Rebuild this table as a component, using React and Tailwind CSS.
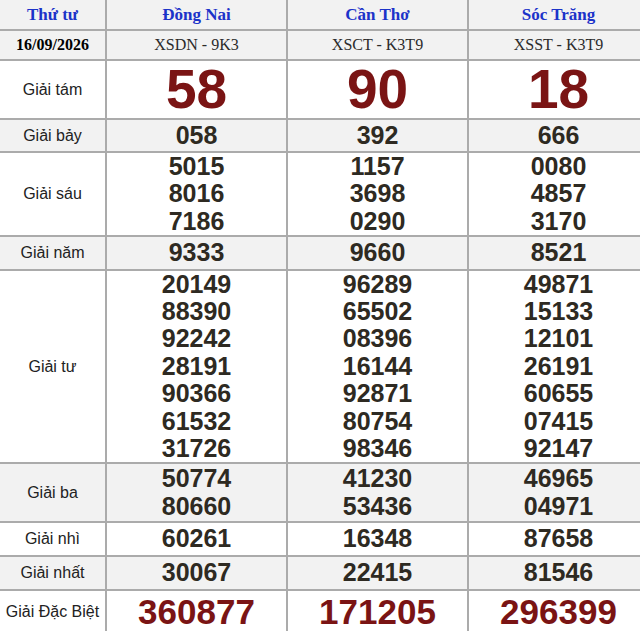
const PROVINCES = [
  { name: 'Đồng Nai', code: 'XSDN - 9K3' },
  { name: 'Cần Thơ', code: 'XSCT - K3T9' },
  { name: 'Sóc Trăng', code: 'XSST - K3T9' },
];

const PRIZES = [
  { label: 'Giải tám', h: 'h-[57px]', big: true, values: [['58'], ['90'], ['18']] },
  { label: 'Giải bảy', h: 'h-[31px]', values: [['058'], ['392'], ['666']] },
  {
    label: 'Giải sáu',
    h: 'h-[82px]',
    values: [
      ['5015', '8016', '7186'],
      ['1157', '3698', '0290'],
      ['0080', '4857', '3170'],
    ],
  },
  { label: 'Giải năm', h: 'h-[32px]', values: [['9333'], ['9660'], ['8521']] },
  {
    label: 'Giải tư',
    h: 'h-[191px]',
    values: [
      ['20149', '88390', '92242', '28191', '90366', '61532', '31726'],
      ['96289', '65502', '08396', '16144', '92871', '80754', '98346'],
      ['49871', '15133', '12101', '26191', '60655', '07415', '92147'],
    ],
  },
  {
    label: 'Giải ba',
    h: 'h-[57px]',
    values: [
      ['50774', '80660'],
      ['41230', '53436'],
      ['46965', '04971'],
    ],
  },
  { label: 'Giải nhì', h: 'h-[32px]', values: [['60261'], ['16348'], ['87658']] },
  { label: 'Giải nhất', h: 'h-[32px]', values: [['30067'], ['22415'], ['81546']] },
  { label: 'Giải Đặc Biệt', h: 'h-[42px]', special: true, values: [['360877'], ['171205'], ['296399']] },
];

export default function App() {
  return (
    <div className="w-[640px] h-[631px] overflow-hidden bg-white">
      <div
        className="grid grid-cols-[105px_179px_179px_179px] gap-[2px] bg-[#ababab] w-[648px]"
        style={{ fontFamily: '"Liberation Sans", Arial, sans-serif' }}
      >
        {/* header */}
        <div className="h-[29px] bg-[#f2f2f2] flex items-center justify-center text-[17px] font-bold text-[#1c33c9] font-['Liberation_Serif',serif]">
          Thứ tư
        </div>
        {PROVINCES.map(p => (
          <div
            key={p.name}
            className="h-[29px] bg-[#f2f2f2] flex items-center justify-center text-[17px] font-bold text-[#1c33c9] font-['Liberation_Serif',serif]"
          >
            {p.name}
          </div>
        ))}

        {/* date / codes */}
        <div className="h-[28px] bg-[#f2f2f2] flex items-center justify-center text-[16px] font-bold text-black font-['Liberation_Serif',serif]">
          16/09/2026
        </div>
        {PROVINCES.map(p => (
          <div
            key={p.code}
            className="h-[28px] bg-[#f2f2f2] flex items-center justify-center text-[16px] text-[#2b2b2b] font-['Liberation_Serif',serif]"
          >
            {p.code}
          </div>
        ))}

        {PRIZES.map((row, i) => {
          const bg = i % 2 === 1 ? 'bg-[#f2f2f2]' : 'bg-white';
          return [
            <div
              key={row.label}
              className={`${row.h} ${bg} flex items-center justify-center text-[16px] text-[#222]`}
            >
              {row.label}
            </div>,
            ...row.values.map((vals, j) => (
              <div
                key={row.label + j}
                className={`${row.h} ${bg} flex flex-col items-center justify-center font-bold`}
              >
                {vals.map(v =>
                  row.big ? (
                    <span key={v} className="text-[55px] leading-[57px] text-[#7a1414]">{v}</span>
                  ) : row.special ? (
                    <span key={v} className="text-[35px] leading-[40px] text-[#7a1414]">{v}</span>
                  ) : (
                    <span key={v} className="text-[25px] leading-[27.4px] text-[#2e2a22]">{v}</span>
                  )
                )}
              </div>
            )),
          ];
        })}
      </div>
    </div>
  );
}
